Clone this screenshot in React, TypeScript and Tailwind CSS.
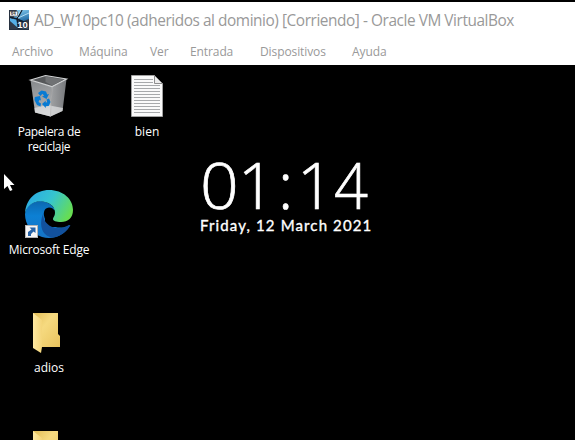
import React from "react";

function VmIcon() {
  return (
    <svg width="20" height="20" viewBox="0 0 20 20" className="shrink-0">
      <defs>
        <linearGradient id="vm" x1="0" y1="0" x2="0.4" y2="1">
          <stop offset="0" stopColor="#8fd6f8" />
          <stop offset="1" stopColor="#246da6" />
        </linearGradient>
      </defs>
      <rect width="20" height="20" fill="#303a49" />
      <path d="M8 0H20V9L12 12L4 9Z" fill="url(#vm)" />
      <path d="M9 9L19 13V19H10Z" fill="#3c5063" />
      <path d="M1 8L8 10L9 18L1 11Z" fill="#55aee6" />
      <path d="M13 0L8 9L0 7M8 9L19 14M8 9L10 20" stroke="#101c2b" strokeWidth="1.5" fill="none" />
      <path d="M12 0L8 7M9 8L20 3" stroke="#c9efff" strokeWidth="0.8" />
      <rect x="0.5" y="1.5" width="8" height="4.5" fill="#f3f3f3" stroke="#666" strokeWidth="0.6" />
      <text x="1.8" y="5.4" fontSize="4.5" fontWeight="700" fontFamily="Liberation Sans, sans-serif" fill="#333">64</text>
      <text x="8.2" y="17.6" fontSize="9.5" fontWeight="700" fontFamily="Liberation Sans, sans-serif" fill="#fff" stroke="#1b2633" strokeWidth="1.2" paintOrder="stroke">10</text>
      <path d="M0.5 0V20M0 19.5H20" stroke="#273140" />
    </svg>
  );
}

function BinIcon() {
  return (
    <svg width="48" height="48" viewBox="0 0 48 48">
      <defs>
        <linearGradient id="binL" x1="0" y1="0" x2="0.2" y2="1">
          <stop offset="0" stopColor="#85888b" />
          <stop offset="0.7" stopColor="#a5a7a9" />
          <stop offset="1" stopColor="#c4c5c6" />
        </linearGradient>
        <linearGradient id="binR" x1="0" y1="0" x2="1" y2="0">
          <stop offset="0" stopColor="#a0a2a4" />
          <stop offset="1" stopColor="#77797c" />
        </linearGradient>
      </defs>
      <path d="M5.5 8L27 14.5L25.5 44.5L10 40.5Z" fill="url(#binL)" />
      <path d="M27 14.5L41.5 7L37.5 39L25.5 44.5Z" fill="url(#binR)" />
      <path d="M9.5 36L22 33L38 36L37.5 39L25.5 44.5L10 40.5Z" fill="#dedfe0" opacity="0.75" />
      <path d="M5.5 8L20.5 3.5L41.5 7L27 14.5Z" fill="#56585a" stroke="#d1d3d4" strokeWidth="1.2" />
      <path d="M20.5 4.5V10L27 13.5L39 7.5Z" fill="#707274" />
      <path d="M27 14.5L25.5 44.5" stroke="#bbb" strokeWidth="0.7" />
      <g fill="#087bd3">
        <path d="M13 21L16.5 18.5L21 19.5L22.2 22.5L24 22L21.5 27L17 24.5L19 23.7L17.5 21.8L15.3 24Z" />
        <path d="M9.8 25L15 24L16 28.5L14.5 27.8L13.5 30L16 31.5L15.5 34.5L12 33L9.5 28Z" />
        <path d="M17 32L20.7 28.8V30.5L22.2 30.2L21.5 27.5L24 26.5L25.5 30L23.7 34L20.8 34.3V36Z" />
      </g>
    </svg>
  );
}

function DocumentIcon() {
  return (
    <svg width="48" height="48" viewBox="0 0 48 48">
      <path d="M8.5 3.5H31.5L39.5 11.5V44.5H8.5Z" fill="#fafafa" stroke="#a1a1a1" />
      <path d="M31.5 3.5V11.5H39.5Z" fill="#ededed" stroke="#8e8e8e" />
      <path d="M11 7.5H30M11 10.5H30M11 13.5H37M11 16.5H37M11 19.5H37M11 22.5H37M11 25.5H37M11 28.5H37M11 31.5H37M11 34.5H37M11 37.5H37M11 40.5H37" stroke="#a7a9ab" />
    </svg>
  );
}

function EdgeIcon() {
  return (
    <svg width="48" height="48" viewBox="0 0 48 48">
      <defs>
        <linearGradient id="edgeTop" x1="0" y1="0.2" x2="1" y2="0.6">
          <stop offset="0" stopColor="#2aa9e5" />
          <stop offset="0.5" stopColor="#36c5cf" />
          <stop offset="1" stopColor="#67dd52" />
        </linearGradient>
        <linearGradient id="edgeLeft" x1="0.5" y1="0" x2="0.5" y2="1">
          <stop offset="0" stopColor="#0c67af" />
          <stop offset="0.4" stopColor="#0c80d4" />
          <stop offset="1" stopColor="#1673c5" />
        </linearGradient>
      </defs>
      <path d="M0 24C1 16 8 11 16 11C23 12 28 15 30 20L20 22V38L44 35.5C46 35 42 41 37 44C31 48 24 49 17 47C7 44 0 35 0 24Z" fill="url(#edgeLeft)" />
      <path d="M19 22C15 29 15 39 20 44C23 47 27 48 31 47C37 45 42 41 45 36C46 34.5 44 34.5 42 36C33 41 22 37 19 29C18 26 18 24 19 22Z" fill="#12519d" />
      <path d="M24 17.5C29 17.5 31 22 29.5 25.5C27.5 28 28 31 32 32L46 33L42 36C34 40 24 36 20.5 30C17.5 24 18.5 18 24 17.5Z" fill="#000" />
      <path d="M0 23C1 9 11 0 24 0C38 0 48 9 48 20C48 28 43 32 36 32C31 32 28 31 28 29C28 27 30 26 30 23C30 17 26 13 18 11.5C9 10 2 16 0 23Z" fill="url(#edgeTop)" />
      <rect x="0.5" y="35.5" width="12" height="12" fill="#f6f6f6" stroke="#b5b5b5" />
      <path d="M3 46V42L6.5 39.5L4.5 37.5H10.5V43L8.5 41.5L6 44V46Z" fill="#2763a7" />
    </svg>
  );
}

function FolderIcon() {
  return (
    <svg width="48" height="48" viewBox="0 0 48 48">
      <defs>
        <linearGradient id="fBack" x1="0" y1="0" x2="1" y2="1">
          <stop offset="0" stopColor="#e2bd57" />
          <stop offset="0.4" stopColor="#f6da80" />
          <stop offset="1" stopColor="#e9c35d" />
        </linearGradient>
        <linearGradient id="fFront" x1="0" y1="0" x2="1" y2="0">
          <stop offset="0" stopColor="#ffe9a2" />
          <stop offset="1" stopColor="#f4d579" />
        </linearGradient>
      </defs>
      <path d="M8 5H33V26L35 28V39H8Z" fill="url(#fBack)" />
      <path d="M8 5L17 12V39L16 45L8 40Z" fill="url(#fFront)" />
    </svg>
  );
}

function Item({ icon, children, className = "" }: { icon: React.ReactNode; children: React.ReactNode; className?: string }) {
  return (
    <div className={`flex h-[118px] w-[98px] flex-col items-center ${className}`}>
      {icon}
      <div className="mt-1 whitespace-nowrap text-center text-[12px] leading-[15px]">{children}</div>
    </div>
  );
}

export default function App() {
  return (
    <div className="flex h-[440px] w-[575px] flex-col overflow-hidden bg-black font-['Open_Sans','Noto_Sans',sans-serif] text-white">
      <div className="h-[65px] shrink-0 border-t-2 border-black bg-white text-[#999]">
        <div className="flex h-[36px] items-center pl-[9px]">
          <VmIcon />
          <div className="ml-[5px] mt-0.5 whitespace-nowrap text-[15.4px] leading-[20px] tracking-[-0.44px]">AD_W10pc10 (adheridos al dominio) [Corriendo] - Oracle VM VirtualBox</div>
        </div>
        <div className="flex h-[27px] items-center pl-[12px] text-[12px] tracking-[-0.1px]">
          <span className="w-[67px]">Archivo</span>
          <span className="w-[71px]">Máquina</span>
          <span className="w-[40px]">Ver</span>
          <span className="w-[70px]">Entrada</span>
          <span className="w-[92px]">Dispositivos</span>
          <span>Ayuda</span>
        </div>
      </div>
      <div className="relative min-h-0 flex-1 overflow-hidden pt-[7px]">
        <div className="grid w-[196px] grid-cols-2">
          <Item icon={<BinIcon />}>
            <span className="tracking-[-0.35px]">Papelera de<br />reciclaje</span>
          </Item>
          <Item icon={<DocumentIcon />}>bien</Item>
          <Item icon={<EdgeIcon />} className="col-span-2"><span className="tracking-[-0.2px]">Microsoft Edge</span></Item>
          <Item icon={<FolderIcon />} className="col-span-2">adios</Item>
          <Item icon={<FolderIcon />} className="col-span-2">{null}</Item>
        </div>
        <svg width="12" height="19" viewBox="0 0 12 19" className="absolute left-[4px] top-[109px]">
          <path d="M0 0V15L3.5 12L6 17L8.5 16L6 11H10.5Z" fill="#fff" />
        </svg>
        <div className="absolute left-[200px] top-[90px] w-[172px]">
          <div className="flex h-[62px] text-[64px] font-light leading-[60px] [-webkit-text-stroke:0.7px_#fff]">
            <span className="w-[38px] origin-left scale-x-[1.06]">0</span>
            <span className="w-[40px]">1</span>
            <span className="w-[19px]">:</span>
            <span className="w-[37px]">1</span>
            <span className="origin-left scale-x-[0.93]">4</span>
          </div>
          <div className="whitespace-nowrap font-['Lato',sans-serif] text-[15px] font-normal leading-[16px] tracking-[1.13px] [-webkit-text-stroke:0.35px_#fff]">Friday, 12 March 2021</div>
        </div>
      </div>
    </div>
  );
}
